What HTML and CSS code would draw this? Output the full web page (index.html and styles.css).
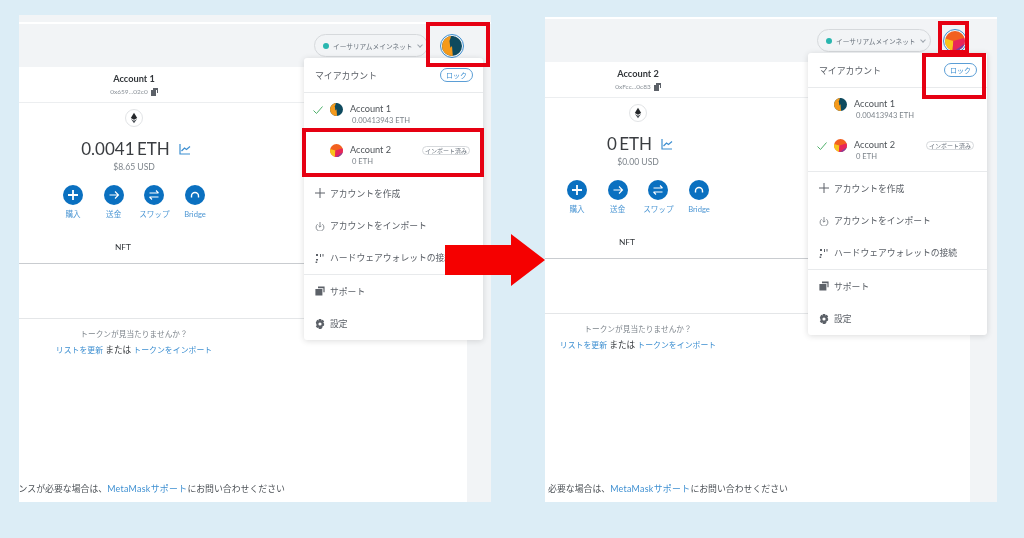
FILE: index.html
```html
<!DOCTYPE html>
<html lang="ja">
  <head>
    <meta charset="UTF-8" />
    <title>アカウントの切り替え</title>
    <link rel="stylesheet" href="styles.css">
  </head>
  <body>
    <svg class="defs" width="0" height="0">
      <clipPath id="round"><circle cx="12" cy="12" r="12" /></clipPath>
      <symbol id="avatar-1" viewBox="0 0 24 24">
        <g clip-path="url(#round)">
          <rect width="24" height="24" fill="#0e4a5e" />
          <path d="M0 0h11l2 24H0z" fill="#f59a1c" />
          <path d="M11 0h3v10l-4 4-1-8z" fill="#0e4a5e" />
        </g>
      </symbol>
      <symbol id="avatar-2" viewBox="0 0 24 24">
        <g clip-path="url(#round)">
          <rect width="24" height="24" fill="#f2601f" />
          <path d="M0 9l10 3-1 12H0z" fill="#f8c41c" />
          <path d="M10 12l14-4v8l-8 8H9z" fill="#e8265a" />
          <path d="M11 24l13-9v9z" fill="#7a3fa8" />
        </g>
      </symbol>
      <symbol id="eth" viewBox="0 0 18 18">
        <path d="M9 3L5.4 9 9 11l3.6-2z" fill="#24272a" />
        <path d="M9 12L5.6 10 9 15l3.4-5z" fill="#4a4f55" />
      </symbol>
      <symbol id="chart" viewBox="0 0 12 12">
        <path d="M1 1v10h10M2.5 8l3-3 2 1.5L11 3.5" fill="none" stroke="currentColor" stroke-width="1.2" />
      </symbol>
      <symbol id="copy" viewBox="0 0 8 8">
        <path d="M3 0h5v5H7V2H3zM1 2h5v6H1z" fill="#5c6168" />
      </symbol>
      <symbol id="check" viewBox="0 0 10 10">
        <path d="M.5 5.5L3.5 8.5 9.5 1.5" fill="none" stroke="#4fb06a" stroke-width="1" />
      </symbol>
      <symbol id="plus" viewBox="0 0 10 10">
        <path d="M5 0v10M0 5h10" stroke="#5c6168" stroke-width="1" />
      </symbol>
      <symbol id="import" viewBox="0 0 10 10">
        <path d="M2.6 3.2a3.9 3.9 0 1 0 4.8 0M5 1v5M3.6 4.8L5 6.2l1.4-1.4" fill="none" stroke="#7a8087" stroke-width=".9" />
      </symbol>
      <symbol id="hardware" viewBox="0 0 10 10">
        <path d="M1 1h2v2H1zM1 6h2v1.5H1zM.6 8.4h1.6V10H.6zM5 1h1v3H5zM7.5 1h1v2.4h-1z" fill="#5c6168" />
      </symbol>
      <symbol id="support" viewBox="0 0 10 10">
        <path d="M3 .6h6.6v5.6H8.4V2.2H3zM.4 3h7v6.4h-7z" fill="#5c6168" />
      </symbol>
      <symbol id="gear" viewBox="0 0 10 10">
        <path fill-rule="evenodd" d="M3.8 0h2.4l.3 1.4 1.3-.6 1.4 1.7-.9 1.1.9 1.1-.2 2-1.3.4-.3 1.3-1.2 1.6H3.8l-.3-1.4-1.3.4-1.4-1.7.9-1.1L.8 3.6l1.4-2.8 1.3.6zM5 3.4a1.6 1.6 0 1 0 0 3.2 1.6 1.6 0 0 0 0-3.2z" fill="#5c6168" />
      </symbol>
    </svg>

    <!-- left screenshot -->
    <section class="shot shot-before">
      <div class="strip"></div>
      <header class="topbar">
        <div class="network"><i class="dot"></i>イーサリアムメインネット<span class="chev"></span></div>
        <div class="avatar-ring"><svg class="avatar"><use href="#avatar-1" /></svg></div>
      </header>
      <div class="body">
        <main class="wallet">
          <div class="account-bar">
            <div class="col">
              <div class="account-name">Account 1</div>
              <div class="address">0x659...02c0 <svg class="copy"><use href="#copy" /></svg></div>
            </div>
          </div>
          <div class="overview">
            <div class="col">
              <div class="eth-badge"><svg><use href="#eth" /></svg></div>
              <div class="balance">0.0041 ETH <svg class="chart"><use href="#chart" /></svg></div>
              <div class="usd">$8.65 USD</div>
              <div class="actions">
                <div class="action"><span class="action-btn">
                  <svg viewBox="0 0 20 20"><path d="M10 5v10M5 10h10" stroke="#fff" stroke-width="1.8" /></svg>
                </span>購入</div>
                <div class="action"><span class="action-btn">
                  <svg viewBox="0 0 20 20"><path d="M5.5 10h9M11 6.5l3.5 3.5-3.5 3.5" fill="none" stroke="#fff" stroke-width="1.1" /></svg>
                </span>送金</div>
                <div class="action"><span class="action-btn">
                  <svg viewBox="0 0 20 20"><path d="M5.5 8h9M12 5.5L14.5 8M14.5 12h-9M8 14.5L5.5 12" fill="none" stroke="#fff" stroke-width="1.1" /></svg>
                </span>スワップ</div>
                <div class="action"><span class="action-btn">
                  <svg viewBox="0 0 20 20"><path d="M6.5 12.5V11a3.5 3.5 0 0 1 7 0v1.5" fill="none" stroke="#fff" stroke-width="1.4" /></svg>
                </span>Bridge</div>
              </div>
            </div>
          </div>
          <div class="tabs"><div class="col">NFT</div></div>
          <div class="empty"></div>
          <div class="help">
            <div class="col">
              <div class="help-q">トークンが見当たりませんか？</div>
              <div class="help-links"><a>リストを更新</a> <span>または</span> <a>トークンをインポート</a></div>
            </div>
          </div>
          <div class="footer"><span>ンスが必要な場合は、<a>MetaMaskサポート</a>にお問い合わせください</span></div>
        </main>
        <div class="gutter"></div>
      </div>
      <aside class="menu">
        <div class="menu-head"><span>マイアカウント</span><span class="lock">ロック</span></div>
        <div class="menu-accounts">
          <div class="acct">
            <svg class="tick"><use href="#check" /></svg>
            <svg class="acct-avatar"><use href="#avatar-1" /></svg>
            <div class="acct-text"><div class="acct-name">Account 1</div><div class="acct-bal">0.00413943 ETH</div></div>
          </div>
          <div class="acct">
            <span class="tick"></span>
            <svg class="acct-avatar"><use href="#avatar-2" /></svg>
            <div class="acct-text"><div class="acct-name">Account 2</div><div class="acct-bal">0 ETH</div></div>
            <span class="tag">インポート済み</span>
          </div>
        </div>
        <div class="menu-group">
          <div class="item"><svg><use href="#plus" /></svg>アカウントを作成</div>
          <div class="item"><svg><use href="#import" /></svg>アカウントをインポート</div>
          <div class="item"><svg><use href="#hardware" /></svg>ハードウェアウォレットの接続</div>
        </div>
        <div class="menu-group">
          <div class="item"><svg><use href="#support" /></svg>サポート</div>
          <div class="item"><svg><use href="#gear" /></svg>設定</div>
        </div>
      </aside>
    </section>

    <!-- right screenshot -->
    <section class="shot shot-after">
      <div class="strip"></div>
      <header class="topbar">
        <div class="network"><i class="dot"></i>イーサリアムメインネット<span class="chev"></span></div>
        <div class="avatar-ring"><svg class="avatar"><use href="#avatar-2" /></svg></div>
      </header>
      <div class="body">
        <main class="wallet">
          <div class="account-bar">
            <div class="col">
              <div class="account-name">Account 2</div>
              <div class="address">0xFcc...0c83 <svg class="copy"><use href="#copy" /></svg></div>
            </div>
          </div>
          <div class="overview">
            <div class="col">
              <div class="eth-badge"><svg><use href="#eth" /></svg></div>
              <div class="balance">0 ETH <svg class="chart"><use href="#chart" /></svg></div>
              <div class="usd">$0.00 USD</div>
              <div class="actions">
                <div class="action"><span class="action-btn">
                  <svg viewBox="0 0 20 20"><path d="M10 5v10M5 10h10" stroke="#fff" stroke-width="1.8" /></svg>
                </span>購入</div>
                <div class="action"><span class="action-btn">
                  <svg viewBox="0 0 20 20"><path d="M5.5 10h9M11 6.5l3.5 3.5-3.5 3.5" fill="none" stroke="#fff" stroke-width="1.1" /></svg>
                </span>送金</div>
                <div class="action"><span class="action-btn">
                  <svg viewBox="0 0 20 20"><path d="M5.5 8h9M12 5.5L14.5 8M14.5 12h-9M8 14.5L5.5 12" fill="none" stroke="#fff" stroke-width="1.1" /></svg>
                </span>スワップ</div>
                <div class="action"><span class="action-btn">
                  <svg viewBox="0 0 20 20"><path d="M6.5 12.5V11a3.5 3.5 0 0 1 7 0v1.5" fill="none" stroke="#fff" stroke-width="1.4" /></svg>
                </span>Bridge</div>
              </div>
            </div>
          </div>
          <div class="tabs"><div class="col">NFT</div></div>
          <div class="empty"></div>
          <div class="help">
            <div class="col">
              <div class="help-q">トークンが見当たりませんか？</div>
              <div class="help-links"><a>リストを更新</a> <span>または</span> <a>トークンをインポート</a></div>
            </div>
          </div>
          <div class="footer"><span>必要な場合は、<a>MetaMaskサポート</a>にお問い合わせください</span></div>
        </main>
        <div class="gutter"></div>
      </div>
      <aside class="menu">
        <div class="menu-head"><span>マイアカウント</span><span class="lock">ロック</span></div>
        <div class="menu-accounts">
          <div class="acct">
            <span class="tick"></span>
            <svg class="acct-avatar"><use href="#avatar-1" /></svg>
            <div class="acct-text"><div class="acct-name">Account 1</div><div class="acct-bal">0.00413943 ETH</div></div>
          </div>
          <div class="acct">
            <svg class="tick"><use href="#check" /></svg>
            <svg class="acct-avatar"><use href="#avatar-2" /></svg>
            <div class="acct-text"><div class="acct-name">Account 2</div><div class="acct-bal">0 ETH</div></div>
            <span class="tag">インポート済み</span>
          </div>
        </div>
        <div class="menu-group">
          <div class="item"><svg><use href="#plus" /></svg>アカウントを作成</div>
          <div class="item"><svg><use href="#import" /></svg>アカウントをインポート</div>
          <div class="item"><svg><use href="#hardware" /></svg>ハードウェアウォレットの接続</div>
        </div>
        <div class="menu-group">
          <div class="item"><svg><use href="#support" /></svg>サポート</div>
          <div class="item"><svg><use href="#gear" /></svg>設定</div>
        </div>
      </aside>
    </section>

    <!-- annotations drawn over the screenshots -->
    <div class="mark mark-avatar-before"></div>
    <div class="mark mark-account"></div>
    <div class="mark mark-avatar-after"></div>
    <div class="mark mark-lock"></div>
    <svg class="arrow" viewBox="0 0 100 52"><path d="M0 11h66V0l34 26-34 26V41H0z" fill="#f50000" /></svg>
  </body>
</html>
```

FILE: styles.css
```css
html,
body {
  margin: 0;
  padding: 0;
  height: 100%;
  overflow: hidden;
}

body {
  position: relative;
  background: #dcedf6;
  color: #33373b;
  font-family: Lato, "Noto Sans CJK JP", sans-serif;
}

a {
  color: #3d8fd1;
}

.defs {
  position: absolute;
}

/* each screenshot sits on the slide at its own place */
.shot {
  position: absolute;
  display: flex;
  flex-direction: column;
  background: #f2f4f6;
  overflow: hidden;
  filter: blur(0.35px);
}

.shot-before {
  left: 19px;
  top: 15px;
  width: 472px;
  height: 487px;
  --cx: 115px;
  --menu-left: 285px;
  --menu-top: 43px;
  --pad: 27px;
}

.shot-before .strip {
  height: 7px;
  border-bottom: 2px solid #fff;
}

.shot-after {
  left: 545px;
  top: 17px;
  width: 452px;
  height: 485px;
  --cx: 93px;
  --menu-left: 263px;
  --menu-top: 36px;
  --pad: 30px;
}

.shot-after .strip {
  height: 0;
  border-bottom: 2px solid #fff;
}

.topbar {
  display: flex;
  justify-content: flex-end;
  align-items: center;
  gap: 12px;
  height: 43px;
  padding-right: var(--pad);
  flex: none;
}

.network {
  display: flex;
  align-items: center;
  width: 114px;
  height: 23px;
  box-sizing: border-box;
  padding-left: 8px;
  border: 1px solid #d6d9dc;
  border-radius: 12px;
  font-size: 6.7px;
  color: #6a737d;
  white-space: nowrap;
}

.dot {
  width: 6px;
  height: 6px;
  margin-right: 4px;
  border-radius: 50%;
  background: #29b6af;
  flex: none;
}

.chev {
  width: 3px;
  height: 3px;
  margin: -2px 0 0 5px;
  border-right: 1px solid #9fa6ae;
  border-bottom: 1px solid #9fa6ae;
  transform: rotate(45deg);
}

.avatar-ring {
  width: 24px;
  height: 24px;
  box-sizing: border-box;
  padding: 1px;
  border: 1px solid #3d8fd1;
  border-radius: 50%;
}

.avatar {
  display: block;
  width: 20px;
  height: 20px;
}

.body {
  display: flex;
  flex: 1;
  min-height: 0;
}

.wallet {
  display: flex;
  flex-direction: column;
  flex: 1;
  min-width: 0;
  background: #fff;
}

.gutter {
  width: 24px;
  flex: none;
}

.shot-after .gutter {
  width: 27px;
}

/* content is centred on a column that the narrower crop cuts off */
.col {
  display: flex;
  flex-direction: column;
  align-items: center;
  width: calc(var(--cx) * 2);
  white-space: nowrap;
}

.account-bar {
  height: 30px;
  padding-top: 5px;
  border-bottom: 1.5px solid #eceef0;
}

.account-name {
  font-size: 9.2px;
  font-weight: 700;
  line-height: 13px;
  color: #33373b;
}

.address {
  display: flex;
  align-items: center;
  gap: 2px;
  font-size: 6.5px;
  line-height: 13px;
  color: #8b9299;
}

.copy {
  width: 8px;
  height: 8px;
}

.overview {
  padding-top: 6px;
}

.eth-badge {
  width: 18px;
  height: 18px;
  box-sizing: border-box;
  border: 1px solid #e2e4e6;
  border-radius: 50%;
}

.eth-badge svg {
  display: block;
  width: 16px;
  height: 16px;
}

.balance {
  display: flex;
  align-items: center;
  gap: 9px;
  margin-top: 10px;
  padding-left: 4px;
  font-size: 17px;
  word-spacing: -2px;
  line-height: 23px;
  color: #3a3d41;
}

.chart {
  width: 12px;
  height: 12px;
  color: #3d8fd1;
}

.usd {
  font-size: 8.6px;
  line-height: 14px;
  color: #7d848b;
}

.actions {
  display: flex;
  margin-top: 11px;
}

.action {
  display: flex;
  flex-direction: column;
  align-items: center;
  width: 40.7px;
  font-size: 7.6px;
  line-height: 12px;
  color: #4d97d4;
}

.action-btn {
  display: block;
  width: 20px;
  height: 20px;
  margin-bottom: 3px;
  border-radius: 50%;
  background: #0a70c0;
}

.action-btn svg {
  display: block;
}

.tabs {
  padding: 20px 0 9px;
  border-bottom: 1px solid #c9ccd0;
  font-size: 8.4px;
  line-height: 14px;
  color: #33373b;
}

.tabs .col {
  box-sizing: border-box;
  padding-right: 22px;
}

.empty {
  height: 54px;
  border-bottom: 1px solid #e4e6e8;
  flex: none;
}

.help {
  padding-top: 8px;
  line-height: 14px;
}

.help-q {
  font-size: 7.7px;
  color: #7d848b;
}

.help-links {
  margin-top: 2px;
  font-size: 7.9px;
  color: #33373b;
}

.help-links span {
  font-size: 8.7px;
}

.footer {
  display: flex;
  justify-content: flex-end;
  margin-top: auto;
  padding: 0 182px 6px 0;
  font-size: 8.9px;
  line-height: 14px;
  color: #4d5257;
  white-space: nowrap;
}

.footer a {
  letter-spacing: 0.3px;
}

/* account dropdown, overlaps the app */
.menu {
  position: absolute;
  left: var(--menu-left);
  top: var(--menu-top);
  width: 179px;
  height: 282px;
  background: #fff;
  border-radius: 3px;
  box-shadow: 0 1px 6px rgba(0, 0, 0, 0.14);
  font-size: 8.8px;
  color: #5c6168;
}

.menu-head {
  display: flex;
  justify-content: space-between;
  align-items: center;
  height: 34px;
  padding: 0 10px 0 11px;
  border-bottom: 1px solid #e8eaec;
  font-size: 8.9px;
}

.lock {
  width: 33px;
  height: 14px;
  box-sizing: border-box;
  border: 1px solid #5b9ed6;
  border-radius: 8px;
  text-align: center;
  font-size: 7px;
  line-height: 12px;
  color: #3d8fd1;
}

.menu-accounts {
  padding-bottom: 1px;
}

.acct {
  display: flex;
  align-items: center;
  height: 41px;
  padding-left: 9px;
  box-sizing: border-box;
}

.tick {
  width: 10px;
  height: 10px;
  margin: -8px 7px 0 0;
  flex: none;
}

.acct-avatar {
  width: 13px;
  height: 13px;
  margin: -8px 7px 0 0;
  flex: none;
}

.acct-text {
  flex: 1;
  white-space: nowrap;
}

.acct-name {
  font-size: 9.2px;
  line-height: 12px;
  color: #4d5257;
}

.acct-bal {
  margin-left: 2px;
  font-size: 7.6px;
  line-height: 10px;
  color: #7d848b;
}

.tag {
  margin: -8px 13px 0 0;
  padding: 0 2px;
  border: 1px solid #d6d9dc;
  border-radius: 5px;
  font-size: 6px;
  line-height: 7px;
  color: #6a737d;
  white-space: nowrap;
}

.menu-group {
  border-top: 1px solid #e8eaec;
}

.item {
  display: flex;
  align-items: center;
  gap: 5px;
  height: 32.4px;
  padding-left: 11px;
  white-space: nowrap;
}

.item svg {
  width: 10px;
  height: 10px;
  flex: none;
}

/* red annotation boxes */
.mark {
  position: absolute;
  box-sizing: border-box;
  border: 4px solid #e60012;
}

.mark-avatar-before {
  left: 426px;
  top: 22px;
  width: 64px;
  height: 45px;
}

.mark-account {
  left: 302px;
  top: 128px;
  width: 182px;
  height: 49px;
}

.mark-avatar-after {
  left: 938px;
  top: 21px;
  width: 31px;
  height: 33px;
}

.mark-lock {
  left: 922px;
  top: 53px;
  width: 64px;
  height: 46px;
}

.arrow {
  position: absolute;
  left: 445px;
  top: 234px;
  width: 100px;
  height: 52px;
}
```
